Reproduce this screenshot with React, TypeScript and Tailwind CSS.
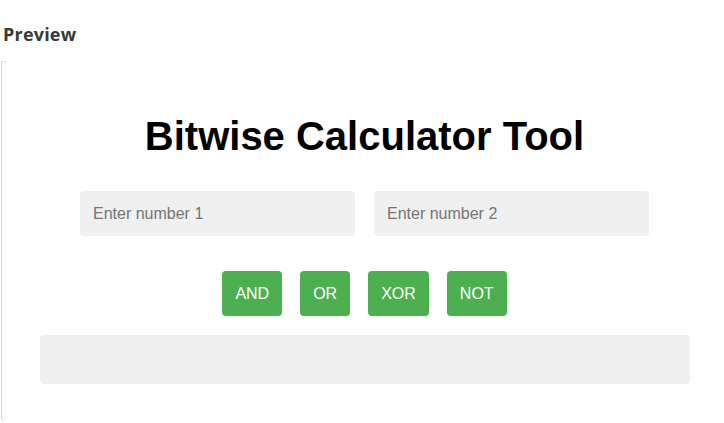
export default function App() {
  return (
    <div className="w-[724px] h-[423px] overflow-hidden bg-white relative">
      <div className="h-[61px] pt-[23px] pl-[3px]">
        <h2 className="text-[18px] leading-[22px] font-bold text-[#383838] tracking-[0.2px]" style={{ fontFamily: "'Open Sans', Inter, sans-serif" }}>
          Preview
        </h2>
      </div>
      <div className="ml-[1px] w-[740px] h-[360px] border-l border-t border-l-[#d0d0d0] border-t-transparent rounded-bl-[4px] bg-white relative">
        <div className="absolute -top-px left-[-1px] w-[5px] h-px bg-[#e0e0e0]" />
        <div className="w-[725px] flex flex-col items-center" style={{ fontFamily: "'Liberation Sans', Arial, sans-serif" }}>
          <h1 className="mt-[50px] text-[40px] leading-[48px] font-bold text-black">Bitwise Calculator Tool</h1>
          <div className="mt-[31px] flex gap-[19px]">
            <input
              placeholder="Enter number 1"
              className="w-[275px] h-[45px] bg-[#f0f0f0] rounded-[4px] pl-[13px] text-[16px] text-black placeholder:text-[#757575] outline-none"
            />
            <input
              placeholder="Enter number 2"
              className="w-[275px] h-[45px] bg-[#f0f0f0] rounded-[4px] pl-[13px] text-[16px] text-black placeholder:text-[#757575] outline-none"
            />
          </div>
          <div className="mt-[35px] flex gap-[18px]">
            {["AND", "OR", "XOR", "NOT"].map((l) => (
              <button key={l} className="h-[45px] px-[13px] bg-[#4caf50] text-white text-[16px] rounded-[4px]">
                {l}
              </button>
            ))}
          </div>
          <div className="mt-[19px] w-[650px] h-[49px] bg-[#f0f0f0] rounded-[4px]" />
        </div>
      </div>
    </div>
  );
}
